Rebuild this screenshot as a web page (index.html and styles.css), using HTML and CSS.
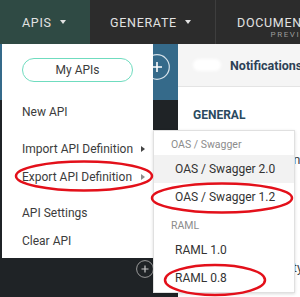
FILE: index.html
```html
<!DOCTYPE html>
<html lang="en">

<head>
    <meta charset="UTF-8">
    <meta name="viewport" content="width=device-width, initial-scale=1.0">
    <title>APIs menu</title>

    <link rel="stylesheet" href="styles.css">
</head>

<body>
    <div class="page">
        <nav class="topbar">
            <div class="tab tab-apis"><span>APIS</span><span class="caret"></span></div>
            <div class="tab tab-generate"><span>GENERATE</span><span class="caret"></span></div>
            <div class="tab tab-docs">
                <span class="tab-main">DOCUMENTATION</span>
                <span class="tab-sub">PREVIEW</span>
            </div>
        </nav>

        <div class="workspace">
            <aside class="sidebar">
                <div class="sidebar-head">
                    <span class="circle-btn big">
                        <svg width="26" height="26" viewBox="0 0 26 26">
                            <circle cx="13" cy="13" r="12.3" fill="none" stroke="#d6e2ea" stroke-width="1.2" />
                            <path d="M8 13h10M13 8v10" stroke="#ffffff" stroke-width="1.6" />
                        </svg>
                    </span>
                </div>
                <div class="sidebar-body">
                    <span class="circle-btn small">
                        <svg width="18" height="18" viewBox="0 0 18 18">
                            <circle cx="9" cy="9" r="8.4" fill="none" stroke="#9a9a9a" stroke-width="1" />
                            <path d="M5.5 9h7M9 5.5v7" stroke="#c8c8c8" stroke-width="1.2" />
                        </svg>
                    </span>
                </div>
            </aside>

            <section class="panel">
                <div class="panel-head">
                    <span class="blur"></span>
                    <span class="panel-title">Notifications</span>
                </div>
                <div class="panel-body">
                    <h3 class="section">GENERAL</h3>
                    <div class="row first">Enable notification</div>
                    <div class="row second">Workspace visibility</div>
                </div>
            </section>
        </div>

        <div class="menu">
            <div class="pill">My APIs</div>
            <div class="menu-group">
                <div class="menu-item">New API</div>
            </div>
            <div class="menu-group">
                <div class="menu-item">Import API Definition <span class="arrow"></span></div>
                <div class="menu-item">Export API Definition <span class="arrow dim"></span></div>
            </div>
            <div class="menu-group last">
                <div class="menu-item">API Settings</div>
                <div class="menu-item">Clear API</div>
            </div>
        </div>

        <div class="submenu">
            <div class="sub-head">OAS / Swagger</div>
            <div class="sub-item hover">OAS / Swagger 2.0</div>
            <div class="sub-item">OAS / Swagger 1.2</div>
            <div class="sub-head spaced">RAML</div>
            <div class="sub-item">RAML 1.0</div>
            <div class="sub-item">RAML 0.8</div>
        </div>

        <svg class="marks" width="300" height="297" viewBox="0 0 300 297">
            <ellipse cx="84" cy="176" rx="68" ry="14.5" />
            <ellipse cx="222" cy="198" rx="70" ry="14.5" />
            <ellipse cx="215" cy="280" rx="50" ry="15" />
        </svg>
    </div>
</body>

</html>
```

FILE: styles.css
```css
body {
    margin: 0;
    font-family: Roboto, "Liberation Sans", sans-serif;
}

.page {
    position: relative;
    width: 300px;
    height: 297px;
    overflow: hidden;
    background-color: #1f2326;
}

/* top navigation */
.topbar {
    display: flex;
    height: 44px;
    background-color: #2c2c2c;
    color: #e2e2e2;
    font-size: 12.5px;
    letter-spacing: 0.7px;
    white-space: nowrap;
}

.tab {
    display: flex;
    align-items: center;
    flex-shrink: 0;
    box-sizing: border-box;
}

.tab-apis {
    width: 90px;
    padding-left: 22px;
    background-color: #2f4a44;
}

.tab-generate {
    width: 126px;
    padding-left: 20px;
    border-right: 1px solid #3e3e3e;
}

.tab-docs {
    flex-direction: column;
    align-items: center;
    padding-left: 21px;
    padding-top: 16px;
}

.tab-main {
    line-height: 14px;
}

.tab-sub {
    line-height: 10px;
    font-size: 8px;
    letter-spacing: 1.6px;
    color: #9a9a9a;
}

.caret {
    width: 0;
    height: 0;
    margin-left: 8px;
    border-left: 3.5px solid transparent;
    border-right: 3.5px solid transparent;
    border-top: 4px solid #e2e2e2;
}

/* sidebar + panel */
.workspace {
    display: flex;
    height: 253px;
}

.sidebar {
    width: 178px;
    flex-shrink: 0;
    display: flex;
    flex-direction: column;
}

.sidebar-head {
    height: 56px;
    background-color: #356a8a;
    display: flex;
    justify-content: flex-end;
    align-items: flex-start;
    padding-right: 8px;
}

.circle-btn {
    display: flex;
}

.circle-btn.big {
    margin-top: 10px;
}

.sidebar-body {
    display: flex;
    justify-content: flex-end;
    padding-right: 24px;
}

.circle-btn.small {
    margin-top: 160px;
}

.panel {
    flex: 1;
    background-color: #ffffff;
}

.panel-head {
    height: 42px;
    display: flex;
    align-items: center;
    padding-left: 15px;
    background-color: #f5f5f5;
    border-bottom: 1px solid #e4e4e4;
}

.blur {
    width: 28px;
    height: 12px;
    margin-right: 9px;
    border-radius: 6px;
    background-color: #ffffff;
    filter: blur(1.5px);
}

.panel-title {
    font-size: 12.5px;
    font-weight: bold;
    color: #2d4156;
    white-space: nowrap;
}

.panel-body {
    padding: 18px 0 0 15px;
    white-space: nowrap;
}

.section {
    margin: 0;
    line-height: 20px;
    font-size: 12px;
    color: #2b4a5f;
}

.row {
    line-height: 20px;
    font-size: 13px;
    color: #444;
}

.row.first {
    margin-top: 25px;
}

.row.second {
    margin-top: 88px;
    font-size: 12.5px;
}

/* dropdown menu */
.menu {
    position: absolute;
    left: 2px;
    top: 44px;
    width: 151px;
    height: 214px;
    box-sizing: border-box;
    padding-top: 14px;
    background-color: #ffffff;
    font-size: 12px;
    color: #3c3c3c;
}

.pill {
    height: 24px;
    margin: 0 20px 16px;
    box-sizing: border-box;
    border: 1.5px solid #6fdcbf;
    border-radius: 12px;
    display: flex;
    align-items: center;
    justify-content: center;
}

.menu-group + .menu-group {
    margin-top: 9px;
}

.menu-group.last {
    margin-top: 8px;
}

.menu-item {
    height: 28px;
    padding: 0 8px 0 20px;
    display: flex;
    align-items: center;
    justify-content: space-between;
    white-space: nowrap;
}

.arrow {
    width: 0;
    height: 0;
    border-top: 3px solid transparent;
    border-bottom: 3px solid transparent;
    border-left: 4px solid #444;
}

.arrow.dim {
    border-left-color: #8c8c8c;
}

/* sub menu */
.submenu {
    position: absolute;
    left: 153px;
    top: 130px;
    width: 142px;
    height: 163px;
    box-sizing: border-box;
    padding-top: 3px;
    background-color: #ffffff;
    border: 1px solid #e0e0e0;
    box-shadow: 0 1px 3px rgba(0, 0, 0, 0.15);
    white-space: nowrap;
}

.sub-head {
    height: 21px;
    line-height: 21px;
    padding-left: 17px;
    font-size: 10.5px;
    color: #8c8c8c;
}

.sub-head.spaced {
    margin-top: 4px;
}

.sub-item {
    height: 28px;
    line-height: 28px;
    padding-left: 21px;
    font-size: 12px;
    color: #333;
}

.sub-item.hover {
    background-color: #f2f2f2;
}

/* red annotation rings */
.marks {
    position: absolute;
    left: 0;
    top: 0;
    pointer-events: none;
}

.marks ellipse {
    fill: none;
    stroke: #e3101a;
    stroke-width: 2.5;
}
```
